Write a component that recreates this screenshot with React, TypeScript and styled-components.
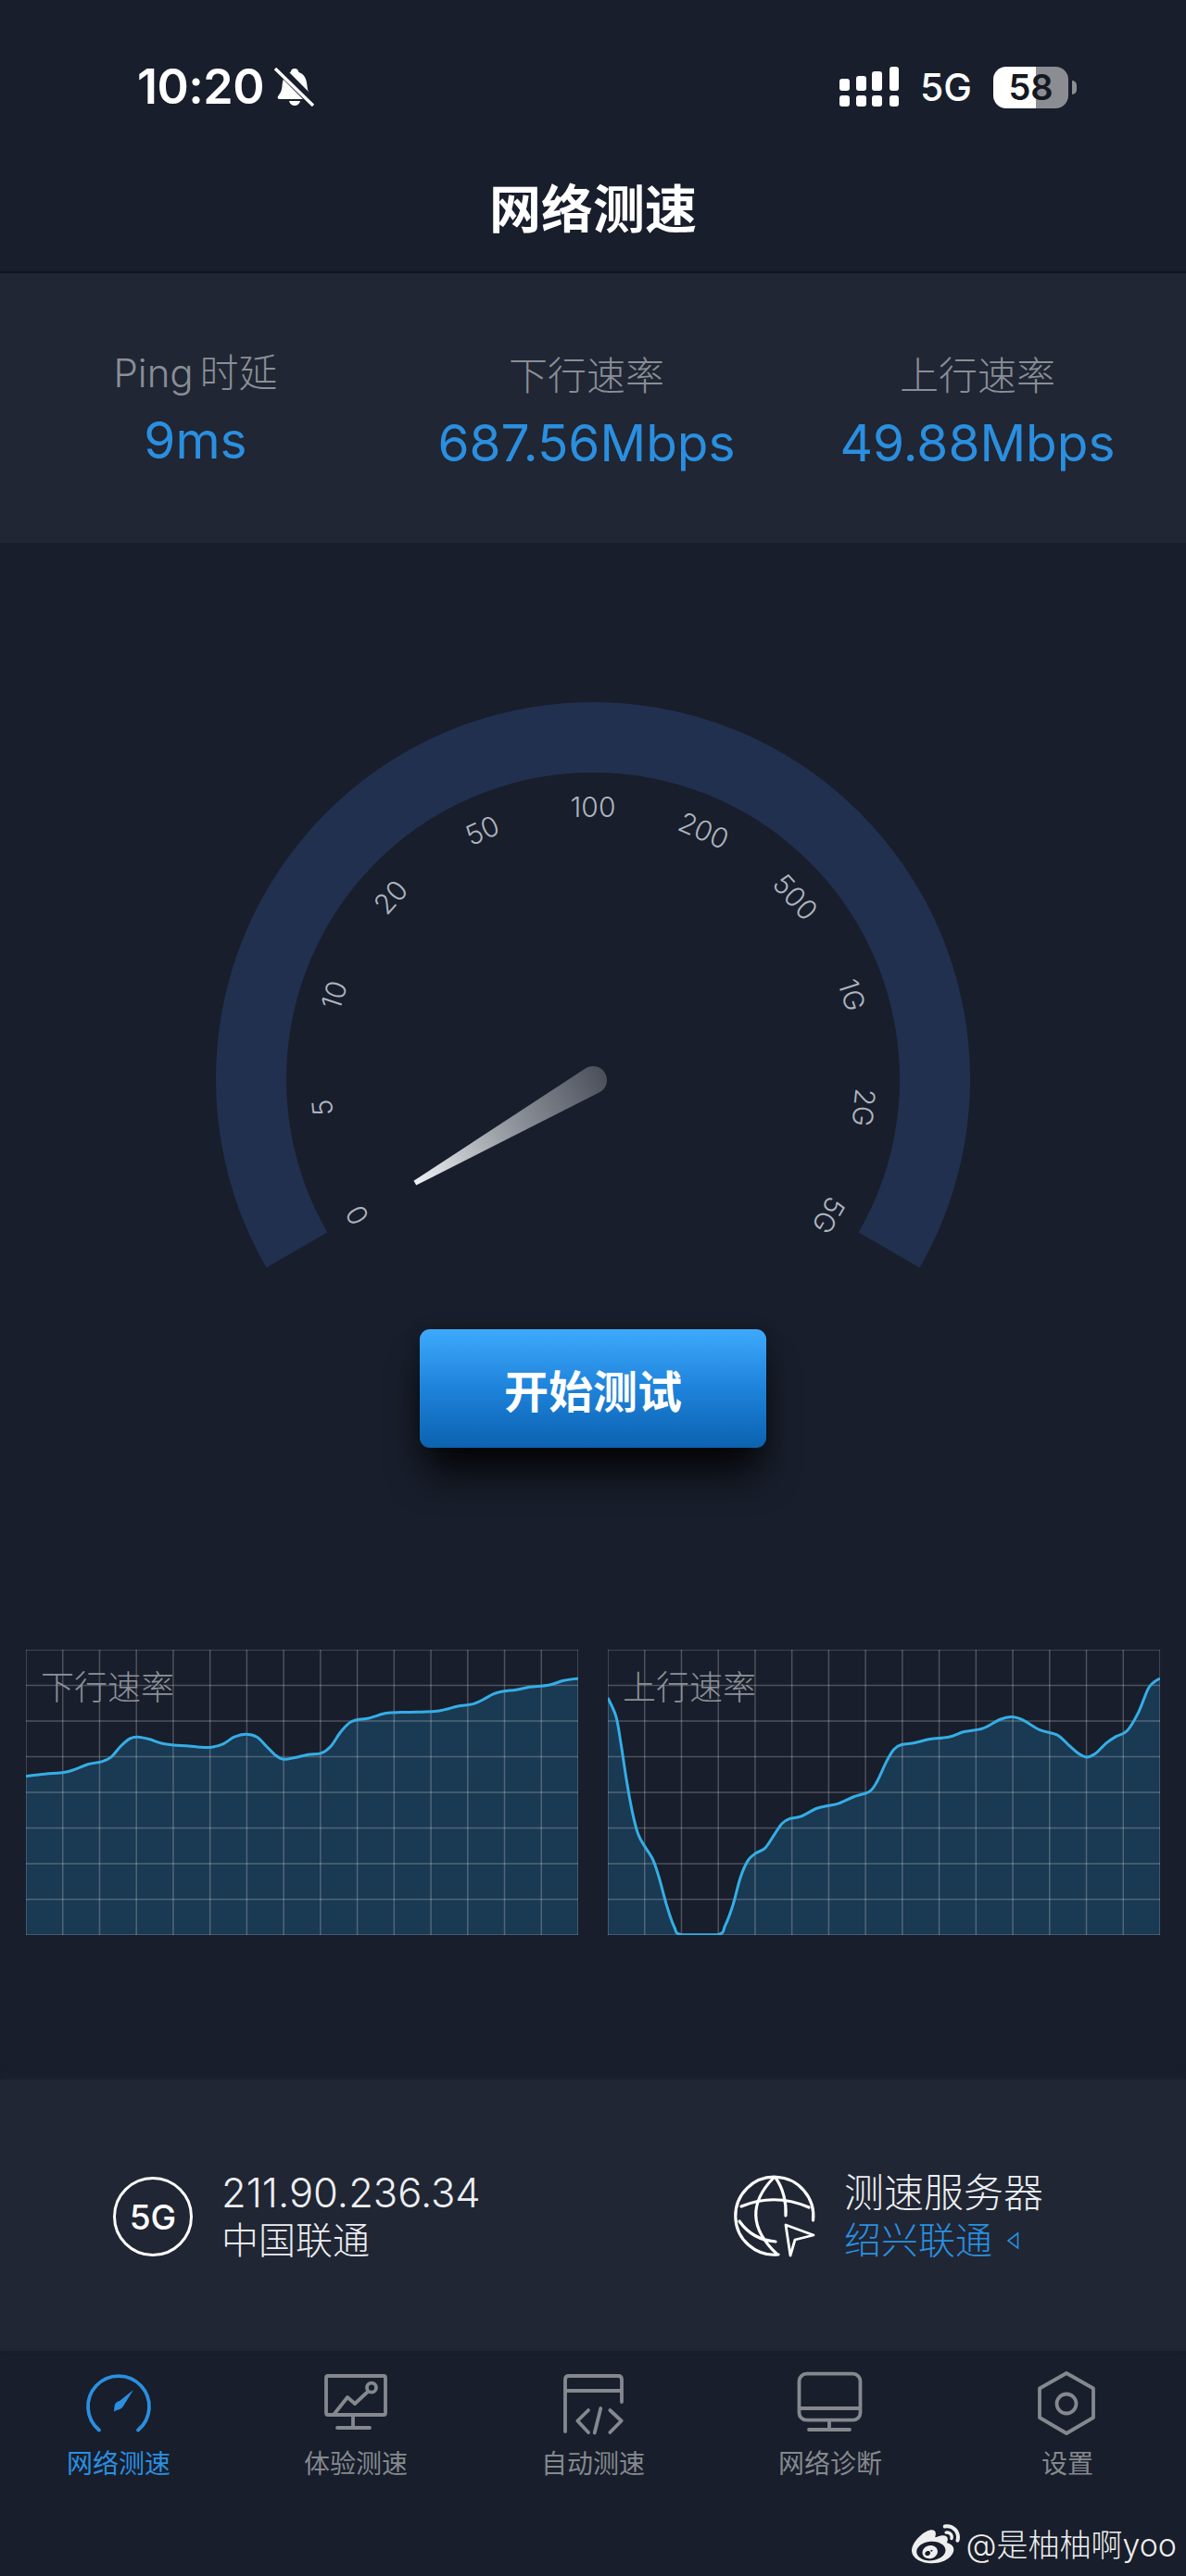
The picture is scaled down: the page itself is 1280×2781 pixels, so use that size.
import React from 'react';
import styled, { createGlobalStyle } from 'styled-components';
import { FaWeibo } from 'react-icons/fa';

const BLUE = '#2a8fe0';
const FONT = 'Inter, "Noto Sans CJK SC", sans-serif';

const GlobalStyle = createGlobalStyle`
  html, body {
    margin: 0;
    padding: 0;
    background: #181e2b;
  }
  * {
    box-sizing: border-box;
  }
`;

const Page = styled.div`
  position: relative;
  width: 1280px;
  height: 2781px;
  overflow: hidden;
  background: #181e2b;
  font-family: ${FONT};
  color: #fff;
`;

const Header = styled.header`
  height: 295px;
  border-bottom: 2px solid #11151e;
`;

const StatusBar = styled.div`
  height: 188px;
  display: flex;
  align-items: center;
  justify-content: space-between;
  padding: 0 127px 0 148px;
`;

const StatusGroup = styled.div<{ $gap: number }>`
  display: flex;
  align-items: center;
  gap: ${p => p.$gap}px;
`;

const Clock = styled.span`
  font-size: 52px;
  font-weight: 600;
  line-height: 60px;
  letter-spacing: -0.5px;
`;

const NetworkLabel = styled.span`
  font-size: 41px;
  font-weight: 500;
  line-height: 44px;
`;

const Battery = styled.div`
  position: relative;
  width: 81px;
  height: 45px;
  border-radius: 14px;
  background: linear-gradient(to right, #fff 0 57%, #8b8d93 57% 100%);
  color: #14181f;
  font-size: 38px;
  font-weight: 600;
  line-height: 45px;
  text-align: center;

  &::after {
    content: '';
    position: absolute;
    left: 85px;
    top: 15px;
    width: 5px;
    height: 15px;
    border-radius: 0 8px 8px 0;
    background: #8b8d93;
  }
`;

const Title = styled.h1`
  margin: 0;
  height: 76px;
  font-size: 56px;
  font-weight: 700;
  line-height: 76px;
  text-align: center;
`;

const Stats = styled.section`
  height: 291px;
  padding: 86px 14px 0 0;
  display: grid;
  grid-template-columns: repeat(3, 1fr);
  background: #202633;
`;

const StatItem = styled.div<{ $lift?: number }>`
  margin-top: ${p => -(p.$lift || 0)}px;
  text-align: center;
`;

const StatLabel = styled.div`
  font-size: 42px;
  font-weight: 300;
  line-height: 50px;
  word-spacing: -5px;
  color: #8a8e97;
  margin-bottom: 17px;
`;

const StatValue = styled.div`
  font-size: 55px;
  font-weight: 400;
  line-height: 60px;
  color: ${BLUE};
`;

const Main = styled.main`
  height: 1659px;
  padding-top: 154px;
  display: flex;
  flex-direction: column;
  align-items: center;
`;

const GaugeSvg = styled.svg`
  display: block;
  width: 880px;
  height: 660px;
  flex: none;
`;

const GaugeText = styled.text`
  font-family: ${FONT};
  font-size: 30px;
  font-weight: 300;
  fill: #aeb4bf;
`;

const StartButton = styled.button`
  flex: none;
  width: 374px;
  height: 128px;
  margin-top: 35px;
  border: none;
  border-radius: 11px;
  background: linear-gradient(to bottom, #3eaafc 0%, #1f84dc 48%, #0b62b0 100%);
  box-shadow: 0 34px 42px -8px rgba(0, 0, 0, 0.85), 0 2px 18px rgba(0, 0, 0, 0.25);
  color: #fff;
  font-family: ${FONT};
  font-size: 48px;
  font-weight: 700;
`;

const ChartRow = styled.div`
  width: 100%;
  margin-top: 218px;
  padding: 0 28px;
  display: flex;
  gap: 32px;
`;

const ChartBox = styled.div`
  position: relative;
  flex: 1;
  height: 308px;
`;

const ChartSvg = styled.svg`
  display: block;
  width: 100%;
  height: 100%;
`;

const ChartLabel = styled.span`
  position: absolute;
  left: 16px;
  top: 19px;
  font-size: 36px;
  font-weight: 300;
  line-height: 44px;
  color: #8c9098;
`;

const InfoPanel = styled.section`
  height: 293px;
  padding: 97px 0 0 122px;
  display: grid;
  grid-template-columns: 671px 1fr;
  align-items: start;
  background: #202633;
  box-shadow: 0 -6px 10px rgba(32, 38, 51, 0.45);
`;

const InfoItem = styled.div`
  display: flex;
  align-items: center;
  gap: 31px;
`;

const NetworkBadge = styled.div`
  width: 86px;
  height: 86px;
  border: 3px solid #fff;
  border-radius: 50%;
  display: flex;
  align-items: center;
  justify-content: center;
  font-size: 37px;
  font-weight: 500;
`;

const InfoLine = styled.div<{ $size: number; $accent?: boolean }>`
  display: flex;
  align-items: center;
  gap: 15px;
  font-size: ${p => p.$size}px;
  font-weight: 300;
  line-height: 51px;
  color: ${p => (p.$accent ? BLUE : '#eceef2')};
`;

const GlobeSvg = styled.svg`
  display: block;
  width: 87px;
  height: 86px;
  overflow: visible;
`;

const BottomNav = styled.nav`
  height: 243px;
  padding-top: 21px;
  display: grid;
  grid-template-columns: repeat(5, 1fr);
  align-items: start;
`;

const NavItem = styled.div<{ $active?: boolean }>`
  display: flex;
  flex-direction: column;
  align-items: center;
  color: ${p => (p.$active ? BLUE : '#85888e')};
`;

const NavSvg = styled.svg.attrs({ viewBox: '0 0 80 72' })`
  display: block;
  width: 80px;
  height: 72px;
  fill: none;
  stroke: currentColor;
  stroke-width: 3.8;
  stroke-linecap: round;
  stroke-linejoin: round;
`;

const NavLabel = styled.span`
  margin-top: 12px;
  font-size: 28px;
  line-height: 34px;
`;

const Watermark = styled.div`
  position: absolute;
  right: 10px;
  top: 2722px;
  display: flex;
  align-items: center;
  gap: 6px;
  font-size: 34px;
  font-weight: 300;
  line-height: 46px;
  color: #eeeeee;

  svg {
    width: 52px;
    height: 52px;
  }
`;

type Point = [number, number];

// traced from the reference, x/y in the chart's viewBox
const DOWN: Point[] = [
  [70, 472], [120, 465], [170, 460], [200, 450], [235, 433], [270, 425], [295, 410], [320, 375],
  [345, 350], [365, 345], [395, 352], [430, 366], [460, 371], [500, 374], [530, 378], [560, 378],
  [590, 368], [620, 345], [650, 336], [680, 345], [705, 375], [730, 405], [750, 417], [780, 412],
  [815, 402], [850, 397], [875, 375], [900, 330], [925, 298], [945, 289], [975, 284], [1020, 268],
  [1060, 265], [1100, 264], [1150, 262], [1180, 255], [1210, 245], [1250, 238], [1275, 225],
  [1305, 205], [1330, 197], [1365, 192], [1400, 183], [1450, 177], [1490, 162], [1528, 155],
];

const UP: Point[] = [
  [40, 218], [62, 280], [75, 370], [90, 490], [105, 590], [120, 660], [135, 695], [158, 740],
  [175, 800], [195, 890], [215, 960], [235, 986], [330, 986], [350, 955], [370, 890], [390, 800],
  [410, 745], [430, 722], [455, 705], [480, 660], [500, 625], [520, 610], [550, 602], [590, 577],
  [620, 568], [650, 560], [690, 538], [730, 522], [750, 490], [775, 425], [795, 385], [815, 370],
  [850, 364], [890, 352], [940, 345], [980, 328], [1030, 317], [1075, 288], [1105, 280],
  [1135, 290], [1180, 322], [1225, 338], [1255, 370], [1280, 397], [1302, 410], [1325, 400],
  [1355, 365], [1380, 344], [1410, 325], [1440, 265], [1465, 190], [1480, 168], [1497, 155],
];

const smoothPath = (pts: Point[]) => {
  let d = `M${pts[0][0]} ${pts[0][1]}`;
  for (let i = 0; i < pts.length - 1; i++) {
    const p0 = pts[Math.max(i - 1, 0)];
    const p1 = pts[i];
    const p2 = pts[i + 1];
    const p3 = pts[Math.min(i + 2, pts.length - 1)];
    const c1x = p1[0] + (p2[0] - p0[0]) / 6;
    const c1y = Math.min(p1[1] + (p2[1] - p0[1]) / 6, 986);
    const c2x = p2[0] - (p3[0] - p1[0]) / 6;
    const c2y = Math.min(p2[1] - (p3[1] - p1[1]) / 6, 986);
    d += ` C${c1x.toFixed(1)} ${c1y.toFixed(1)} ${c2x.toFixed(1)} ${c2y.toFixed(1)} ${p2[0]} ${p2[1]}`;
  }
  return d;
};

const SpeedChart: React.FC<{ label: string; points: Point[] }> = ({ label, points }) => {
  const x0 = points[0][0];
  const x1 = points[points.length - 1][0];
  const w = x1 - x0;
  const line = smoothPath(points);
  return (
    <ChartBox>
      <ChartSvg viewBox={`${x0} 62 ${w} 925`} preserveAspectRatio="none">
        <path d={`${line} L${x1} 987 L${x0} 987 Z`} fill="#2389c4" fillOpacity="0.26" />
        {Array.from({ length: 16 }, (_, i) => (
          <line
            key={i}
            x1={x0 + (w * i) / 15}
            x2={x0 + (w * i) / 15}
            y1={62}
            y2={987}
            stroke="#fff"
            strokeOpacity="0.23"
            strokeWidth="1.5"
            vectorEffect="non-scaling-stroke"
          />
        ))}
        {Array.from({ length: 9 }, (_, i) => (
          <line
            key={i}
            x1={x0}
            x2={x1}
            y1={62 + (925 * i) / 8}
            y2={62 + (925 * i) / 8}
            stroke="#fff"
            strokeOpacity="0.23"
            strokeWidth="1.5"
            vectorEffect="non-scaling-stroke"
          />
        ))}
        <path d={line} fill="none" stroke="#35aee6" strokeWidth="3" vectorEffect="non-scaling-stroke" />
      </ChartSvg>
      <ChartLabel>{label}</ChartLabel>
    </ChartBox>
  );
};

const TICKS = ['0', '5', '10', '20', '50', '100', '200', '500', '1G', '2G', '5G'];

const polar = (r: number, deg: number) => {
  const a = ((deg - 90) * Math.PI) / 180;
  return `${(640 + r * Math.cos(a)).toFixed(2)} ${(1165 + r * Math.sin(a)).toFixed(2)}`;
};

const Gauge = () => (
  <GaugeSvg viewBox="200 740 880 660">
    <defs>
      <linearGradient id="needle" gradientUnits="userSpaceOnUse" x1="-222" y1="0" x2="15" y2="0">
        <stop offset="0" stopColor="#eef1f4" />
        <stop offset="0.5" stopColor="#92969e" />
        <stop offset="1" stopColor="#4a4f5a" />
      </linearGradient>
    </defs>
    <path
      d={`M${polar(407, -120)} A407 407 0 1 1 ${polar(407, 120)} L${polar(331, 120)} A331 331 0 1 0 ${polar(331, -120)} Z`}
      fill="#22304f"
    />
    {TICKS.map((t, i) => (
      <GaugeText
        key={t}
        x={640}
        y={871}
        textAnchor="middle"
        dominantBaseline="central"
        transform={`rotate(${-120 + i * 24} 640 1165)`}
      >
        {t}
      </GaugeText>
    ))}
    <path
      transform="translate(640 1166) rotate(-30)"
      d="M-222 -2.5 L0 -15 A15 15 0 0 1 0 15 L-222 3 Z"
      fill="url(#needle)"
    />
  </GaugeSvg>
);

const SignalIcon = () => (
  <svg width="64" height="44" viewBox="0 0 64 44" fill="#fff">
    <rect x="0" y="31" width="11" height="12" rx="3" />
    <rect x="18" y="31" width="11" height="12" rx="3" />
    <rect x="35" y="31" width="11" height="12" rx="3" />
    <rect x="54" y="31" width="10" height="12" rx="3" />
    <rect x="0" y="13" width="11" height="13" rx="3" />
    <rect x="18" y="10" width="11" height="16" rx="3" />
    <rect x="35" y="5" width="11" height="21" rx="3" />
    <rect x="54" y="0" width="10" height="26" rx="3" />
  </svg>
);

const BellOffIcon = () => (
  <svg width="44" height="42" viewBox="0 0 44 42">
    <path
      d="M22 1 C25 1 26 3 26.5 5 C33 7 35 13 35.5 20 C36 26 38 28 40 31 C41 33 40 34 38 34 H6 C4 34 3 33 4 31 C6 28 8 26 8.500 20 C9 13 11 7 17.5 5 C18 3 19 1 22 1 Z"
      fill="#fff"
    />
    <path d="M16 36 H28 C27 40 24 41 22 41 C20 41 17 40 16 36 Z" fill="#fff" />
    <path d="M3 -1 L47 43" stroke="#181e2b" strokeWidth="10" />
    <path d="M1 1 L42 41" stroke="#fff" strokeWidth="3.4" />
  </svg>
);

const GlobeIcon = () => (
  <GlobeSvg viewBox="13 10 87 86" fill="none" stroke="#fff" strokeWidth="3.2" strokeLinecap="round" strokeLinejoin="round">
    <path d="M97.500 57 A42 42 0 1 0 60 94" />
    <path d="M20 42 Q56 27 93 43" />
    <path d="M18 58 Q32 78 57 80" />
    <path d="M55 11 Q15 52 58 93" />
    <path d="M57 11 C65 22 69 38 68 52" />
    <path d="M68 62 L98 73 L78 78 L73 95 Z" strokeWidth="2.8" />
  </GlobeSvg>
);

const App = () => (
  <Page>
    <GlobalStyle />
    <Header>
      <StatusBar>
        <StatusGroup $gap={11}>
          <Clock>10:20</Clock>
          <BellOffIcon />
        </StatusGroup>
        <StatusGroup $gap={23}>
          <SignalIcon />
          <NetworkLabel>5G</NetworkLabel>
          <Battery>58</Battery>
        </StatusGroup>
      </StatusBar>
      <Title>网络测速</Title>
    </Header>

    <Stats>
      <StatItem $lift={3}>
        <StatLabel>Ping 时延</StatLabel>
        <StatValue>9ms</StatValue>
      </StatItem>
      <StatItem>
        <StatLabel>下行速率</StatLabel>
        <StatValue>687.56Mbps</StatValue>
      </StatItem>
      <StatItem>
        <StatLabel>上行速率</StatLabel>
        <StatValue>49.88Mbps</StatValue>
      </StatItem>
    </Stats>

    <Main>
      <Gauge />
      <StartButton>开始测试</StartButton>
      <ChartRow>
        <SpeedChart label="下行速率" points={DOWN} />
        <SpeedChart label="上行速率" points={UP} />
      </ChartRow>
    </Main>

    <InfoPanel>
      <InfoItem>
        <NetworkBadge>5G</NetworkBadge>
        <div>
          <InfoLine $size={43.5}>211.90.236.34</InfoLine>
          <InfoLine $size={40}>中国联通</InfoLine>
        </div>
      </InfoItem>
      <InfoItem>
        <GlobeIcon />
        <div>
          <InfoLine $size={43}>测速服务器</InfoLine>
          <InfoLine $size={40} $accent>
            绍兴联通
            <svg width="14" height="20" viewBox="0 0 14 20" fill="none" stroke={BLUE} strokeWidth="1.6">
              <path d="M12.500 2 L2 10 L12.500 18 Z" />
            </svg>
          </InfoLine>
        </div>
      </InfoItem>
    </InfoPanel>

    <BottomNav>
      <NavItem $active>
        <NavSvg>
          <path d="M19 64.500 A33 33 0 1 1 61 64.500" />
          <path
            d="M56 21 L46 37 Q44 42 38 43 L35 44.500 L35.500 39 Q36 34 41 33 Z"
            fill="currentColor"
            stroke="none"
          />
        </NavSvg>
        <NavLabel>网络测速</NavLabel>
      </NavItem>
      <NavItem>
        <NavSvg>
          <rect x="8" y="6" width="64" height="42" rx="2" />
          <path d="M16 48 L31 29 L39 36 L54 22" />
          <circle cx="57" cy="18.700" r="5" fill="#181e2b" />
          <path d="M37 49 V62 M20 62 H55" />
        </NavSvg>
        <NavLabel>体验测速</NavLabel>
      </NavItem>
      <NavItem>
        <NavSvg>
          <path d="M10 66 V10 Q10 6 14 6 H67 Q71 6 71 10 V34 M10 22 H71" />
          <path d="M35 43 L23.300 54.500 L35 67 M58.300 43 L70.700 54.500 L58.300 67 M48.300 41 L41.700 67.500" />
        </NavSvg>
        <NavLabel>自动测速</NavLabel>
      </NavItem>
      <NavItem>
        <NavSvg>
          <rect x="6.500" y="3.700" width="66" height="50" rx="8" />
          <path d="M7 41 H72 M39 55 V64 M17 64 H61" />
        </NavSvg>
        <NavLabel>网络诊断</NavLabel>
      </NavItem>
      <NavItem>
        <NavSvg>
          <path d="M39 3 L68 19.500 V51 L39 68 L10 51 V19.500 Z" />
          <circle cx="39" cy="36" r="10.500" />
        </NavSvg>
        <NavLabel>设置</NavLabel>
      </NavItem>
    </BottomNav>

    <Watermark>
      <FaWeibo />
      <span>@是柚柚啊yoo</span>
    </Watermark>
  </Page>
);

export default App;
